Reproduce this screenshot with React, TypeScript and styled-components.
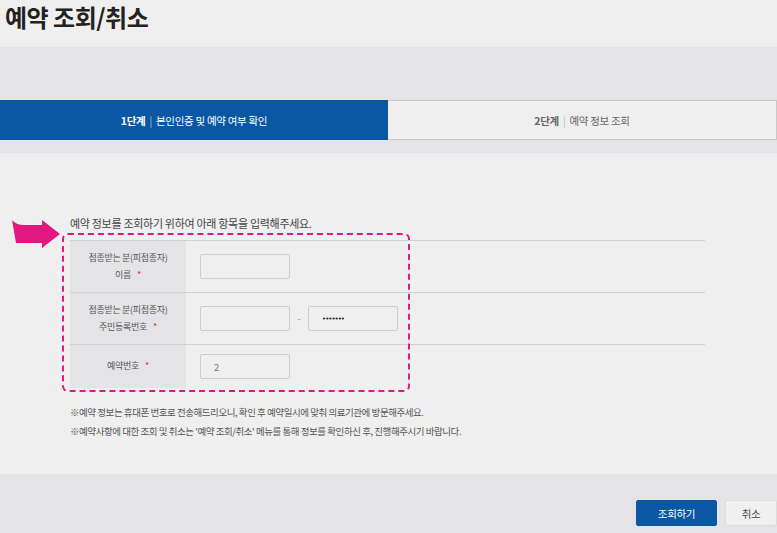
import React from "react";
import styled, {createGlobalStyle} from "styled-components";

const GlobalStyle = createGlobalStyle`
  html, body {
    margin: 0;
    padding: 0;
    background: #efefef;
  }
  body {
    font-family: "Noto Sans CJK KR", "Noto Sans", sans-serif;
    color: #333;
  }
`;

const Page = styled.div`
  width: 777px;
  height: 533px;
  display: flex;
  flex-direction: column;
  overflow: hidden;
`;

const Header = styled.div`
  height: 47px;
  padding-left: 5px;
  box-sizing: border-box;
  background: #efefef;
`;

const Title = styled.h1`
  margin: 0;
  font-size: 24px;
  font-weight: 700;
  line-height: 34px;
  letter-spacing: -0.5px;
  color: #222;
`;

const StepsBand = styled.div`
  background: #e4e4e6;
  padding: 53px 0 13px;
`;

const Tabs = styled.div`
  display: grid;
  grid-template-columns: 388px 1fr;
  height: 40px;
`;

const Tab = styled.div<{$active?: boolean}>`
  display: flex;
  align-items: center;
  justify-content: center;
  gap: 4px;
  font-size: 10.5px;
  letter-spacing: -0.3px;
  background: ${p => (p.$active ? "#0a58a4" : "#efefef")};
  color: ${p => (p.$active ? "#fff" : "#666")};
  border: ${p => (p.$active ? "none" : "1px solid #c9c9c9")};
  border-left: none;
  box-sizing: border-box;
`;

const StepNo = styled.b`
  font-weight: 700;
`;

const Bar = styled.span<{$active?: boolean}>`
  color: ${p => (p.$active ? "rgba(255,255,255,0.6)" : "#bbb")};
`;

const Content = styled.div`
  height: 321px;
  background: #efefef;
  box-sizing: border-box;
  padding: 63px 72px 0 70px;
`;

const Lead = styled.p`
  margin: 0 0 10px;
  font-size: 11px;
  line-height: 14px;
  letter-spacing: -0.3px;
  color: #444;
`;

const TableWrap = styled.div`
  position: relative;
`;

const Row = styled.div`
  display: grid;
  grid-template-columns: 116px 1fr;
  border-top: 1px solid #cfcfcf;
  &:last-child {
    border-bottom: 1px solid #cfcfcf;
  }
`;

const Label = styled.div`
  background: #e4e4e6;
  display: flex;
  flex-direction: column;
  align-items: center;
  justify-content: center;
  font-size: 9px;
  line-height: 16.5px;
  color: #555;
  letter-spacing: -0.3px;
  padding: 9px 0;
`;

const Star = styled.span`
  color: #e03040;
  margin-left: 6px;
`;

const Field = styled.div`
  display: flex;
  align-items: center;
  padding: 9px 14px;
`;

const Input = styled.div`
  width: 90px;
  height: 25px;
  box-sizing: border-box;
  border: 1px solid #cdcdcd;
  border-radius: 2px;
  background: #efefef;
  display: flex;
  align-items: center;
  padding-left: 13px;
  font-size: 9.5px;
  color: #777;
`;

const Dash = styled.span`
  width: 18px;
  text-align: center;
  font-size: 9px;
  color: #888;
`;

const Masked = styled.span`
  color: #222;
  font-size: 7px;
  letter-spacing: -1px;
  font-family: "DejaVu Sans", sans-serif;
`;

const Notes = styled.div`
  margin-top: 15px;
  font-size: 9.5px;
  line-height: 19px;
  letter-spacing: -0.45px;
  color: #555;
`;

const Highlight = styled.div`
  position: absolute;
  left: -8px;
  top: -7px;
  width: 348px;
  height: 159px;
  box-sizing: border-box;
  border: 2px dashed #e2177f;
  border-radius: 6px;
  pointer-events: none;
`;

const Pointer = styled.svg`
  position: absolute;
  left: -58px;
  top: -21px;
`;

const Footer = styled.div`
  flex: 1;
  background: #e4e4e6;
  display: flex;
  justify-content: flex-end;
  align-items: flex-start;
  padding-top: 26px;
  gap: 8px;
`;

const Button = styled.button<{$primary?: boolean}>`
  height: 26px;
  width: ${p => (p.$primary ? "81px" : "52px")};
  border-radius: 2px;
  font-family: inherit;
  font-size: 10.5px;
  letter-spacing: -0.3px;
  border: 1px solid ${p => (p.$primary ? "#0a58a4" : "#dcdcdc")};
  background: ${p => (p.$primary ? "#0a58a4" : "#f0f0f0")};
  color: ${p => (p.$primary ? "#fff" : "#444")};
  padding: 0;
`;

const App: React.FC = () => {
  return (
    <Page>
      <GlobalStyle />
      <Header>
        <Title>예약 조회/취소</Title>
      </Header>
      <StepsBand>
        <Tabs>
          <Tab $active>
            <StepNo>1단계</StepNo>
            <Bar $active>|</Bar>
            <span>본인인증 및 예약 여부 확인</span>
          </Tab>
          <Tab>
            <StepNo>2단계</StepNo>
            <Bar>|</Bar>
            <span>예약 정보 조회</span>
          </Tab>
        </Tabs>
      </StepsBand>
      <Content>
        <Lead>예약 정보를 조회하기 위하여 아래 항목을 입력해주세요.</Lead>
        <TableWrap>
          <Row>
            <Label>
              <span>접종받는 분(피접종자)</span>
              <span>이름<Star>*</Star></span>
            </Label>
            <Field>
              <Input />
            </Field>
          </Row>
          <Row>
            <Label>
              <span>접종받는 분(피접종자)</span>
              <span>주민등록번호<Star>*</Star></span>
            </Label>
            <Field>
              <Input />
              <Dash>-</Dash>
              <Input><Masked>•••••••</Masked></Input>
            </Field>
          </Row>
          <Row>
            <Label>
              <span>예약번호<Star>*</Star></span>
            </Label>
            <Field>
              <Input>2</Input>
            </Field>
          </Row>
          <Highlight />
          <Pointer width="50" height="30" viewBox="0 0 50 30">
            <path
              d="M0,1 Q4,6 12,6 L30,6 L30,1 L48,15 L30,29 L30,24 L4,24 Q2,12 0,1 Z"
              fill="#e2177f"
            />
          </Pointer>
        </TableWrap>
        <Notes>
          <div>※예약 정보는 휴대폰 번호로 전송해드리오니, 확인 후 예약일시에 맞춰 의료기관에 방문해주세요.</div>
          <div>※예약사항에 대한 조회 및 취소는 '예약 조회/취소' 메뉴를 통해 정보를 확인하신 후, 진행해주시기 바랍니다.</div>
        </Notes>
      </Content>
      <Footer>
        <Button $primary>조회하기</Button>
        <Button>취소</Button>
      </Footer>
    </Page>
  );
};

export default App;
